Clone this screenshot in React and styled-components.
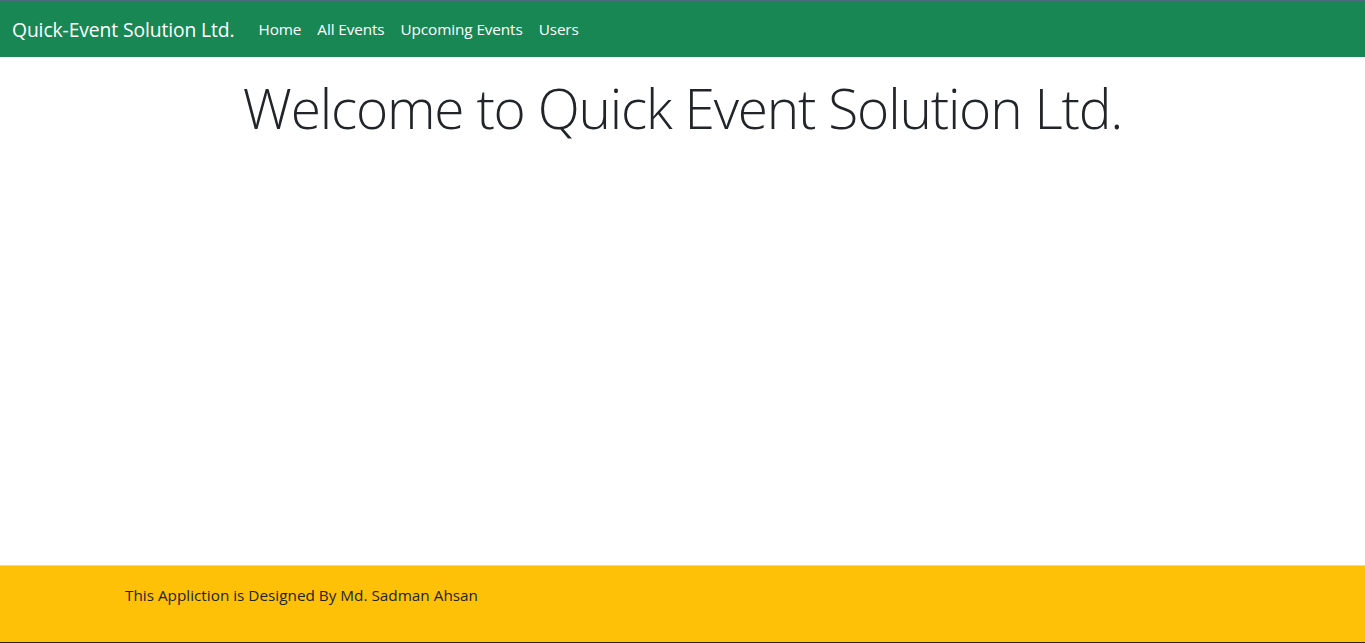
import React from "react";
import styled, { createGlobalStyle } from "styled-components";

const GlobalStyle = createGlobalStyle`
  * { box-sizing: border-box; }
  html, body { margin: 0; padding: 0; }
  body {
    font-family: "Open Sans", "Noto Sans", sans-serif;
    color: #212529;
    background: #fff;
  }
`;

const Page = styled.div`
  min-height: 643px;
  display: flex;
  flex-direction: column;
  border-top: 1px solid #4f6a82;
  border-bottom: 1px solid #2a2418;
`;

const NavBar = styled.nav`
  height: 56px;
  background: #198754;
  display: flex;
  align-items: center;
  padding: 0 12px;
`;

const Brand = styled.a`
  color: #fff;
  font-size: 19.3px;
  margin-right: 16px;
  text-decoration: none;
  letter-spacing: -0.1px;
`;

const NavLinks = styled.ul`
  display: flex;
  list-style: none;
  margin: 0;
  padding: 0;
`;

const NavLink = styled.a`
  display: block;
  color: #fff;
  font-size: 15.3px;
  padding: 8px;
  text-decoration: none;
  letter-spacing: -0.1px;
`;

const Main = styled.main`
  flex: 1;
  padding-top: 18px;
`;

const Heading = styled.h1`
  margin: 0;
  text-align: center;
  font-weight: 300;
  font-size: 55px;
  line-height: 1.2;
  letter-spacing: -1.2px;
`;

const Footer = styled.footer`
  background: #ffc107;
  border-top: 1px solid #e9d9a6;
  height: 77px;
  padding: 17px 125px;
`;

const FooterText = styled.p`
  margin: 0;
  font-size: 15.3px;
  line-height: 24px;
  color: #212529;
`;

export default function App() {
  const links = ["Home", "All Events", "Upcoming Events", "Users"];
  return (
    <>
      <GlobalStyle />
      <Page>
        <NavBar>
          <Brand href="#">Quick-Event Solution Ltd.</Brand>
          <NavLinks>
            {links.map((l) => (
              <li key={l}>
                <NavLink href="#">{l}</NavLink>
              </li>
            ))}
          </NavLinks>
        </NavBar>
        <Main>
          <Heading>Welcome to Quick Event Solution Ltd.</Heading>
        </Main>
        <Footer>
          <FooterText>This Appliction is Designed By Md. Sadman Ahsan</FooterText>
        </Footer>
      </Page>
    </>
  );
}
